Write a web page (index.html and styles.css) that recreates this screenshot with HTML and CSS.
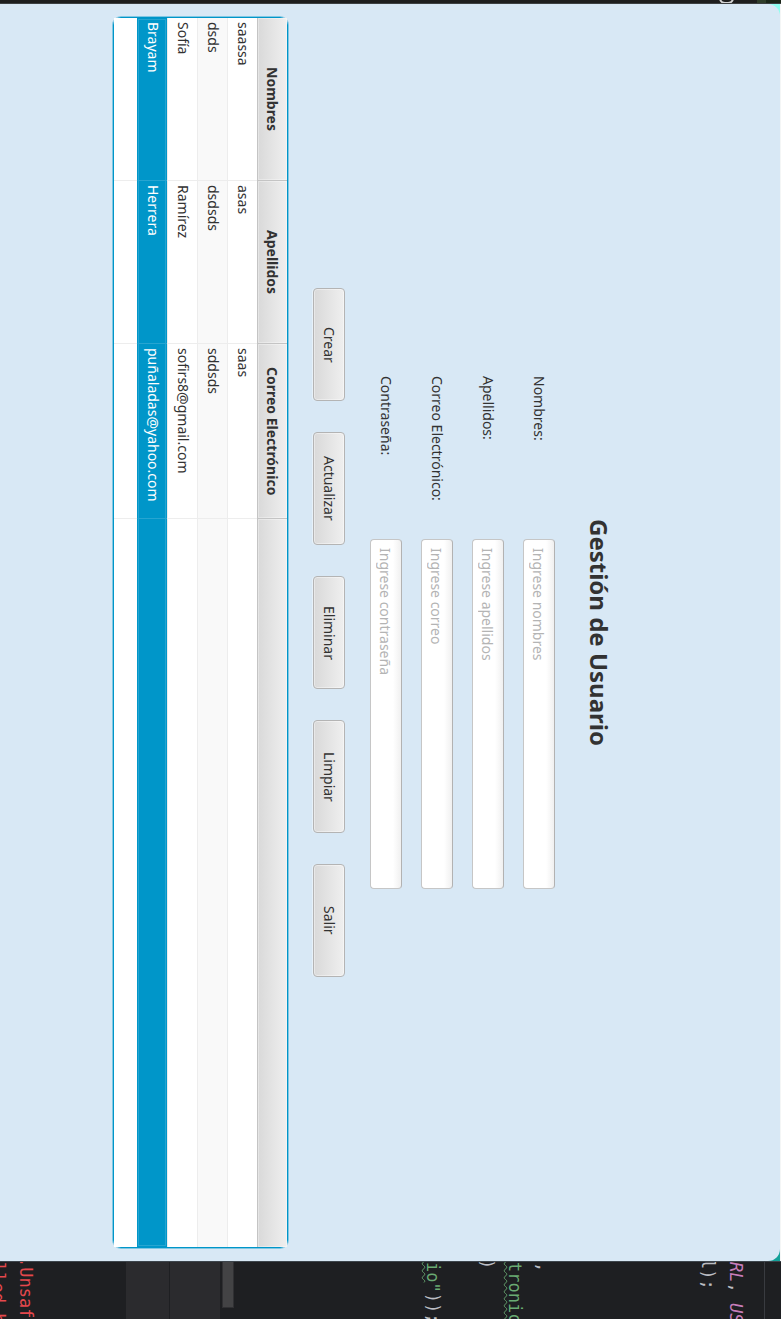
FILE: index.html
```html
<!DOCTYPE html>
<html lang="es">
<head>
<meta charset="utf-8">
<title>Gestión de Usuario</title>
<link rel="stylesheet" href="styles.css">
</head>
<body>
<div class="edge"><span class="edge-green"></span><span class="edge-glyph"></span></div>
<div class="desktop">
  <main class="window">
    <h1 class="title">Gestión de Usuario</h1>
    <form class="form">
      <label for="nombres">Nombres:</label>
      <input class="field" id="nombres" type="text" placeholder="Ingrese nombres">
      <label for="apellidos">Apellidos:</label>
      <input class="field" id="apellidos" type="text" placeholder="Ingrese apellidos">
      <label for="correo">Correo Electrónico:</label>
      <input class="field" id="correo" type="email" placeholder="Ingrese correo">
      <label for="clave">Contraseña:</label>
      <input class="field" id="clave" type="password" placeholder="Ingrese contraseña">
    </form>
    <div class="actions">
      <button class="button" type="button">Crear</button>
      <button class="button" type="button">Actualizar</button>
      <button class="button" type="button">Eliminar</button>
      <button class="button" type="button">Limpiar</button>
      <button class="button" type="button">Salir</button>
    </div>
    <div class="table-frame">
      <table class="table">
        <colgroup><col class="col-name"><col class="col-name"><col class="col-mail"><col></colgroup>
        <thead>
          <tr><th>Nombres</th><th>Apellidos</th><th>Correo Electrónico</th><th></th></tr>
        </thead>
        <tbody>
          <tr><td>saassa</td><td>asas</td><td>saas</td><td></td></tr>
          <tr class="odd"><td>dsds</td><td>dsdsds</td><td>sddsds</td><td></td></tr>
          <tr><td>Sofía</td><td>Ramírez</td><td>sofirs8@gmail.com</td><td></td></tr>
          <tr class="selected"><td>Brayam</td><td>Herrera</td><td>puñaladas@yahoo.com</td><td></td></tr>
          <tr class="rest"><td></td><td></td><td></td><td></td></tr>
        </tbody>
      </table>
    </div>
  </main>
</div>
<div class="editor">
  <div class="tabs"></div>
  <div class="line constant">RL<span class="plain">,</span> US</div>
  <div class="line plain cut">l);</div>
  <div class="line plain after-block">,</div>
  <div class="line string"><span class="typo">tronic</span></div>
  <div class="line plain cut">)</div>
  <div class="line string after-blank"><span class="typo">io</span>"<span class="plain">));</span></div>
  <div class="scrollbar"></div>
  <div class="panel panel-wide"></div>
  <div class="panel"></div>
  <div class="line error console">.Unsafe</div>
  <div class="line error">lled b</div>
</div>
</body>
</html>
```
FILE: styles.css
```css
html {
  writing-mode: vertical-rl;
  text-orientation: sideways;
  background: #1e1f22;
}

* {
  box-sizing: border-box;
}

body {
  display: flex;
  margin: 0;
  block-size: 100vw;
  inline-size: 100vh;
  overflow: hidden;
  color: #323232;
  font: 14px/20px "Noto Sans", "Open Sans", sans-serif;
}

/* strip of the application behind, before the window */
.edge {
  flex: none;
  inline-size: 4px;
  overflow: hidden;
  background: #1e1e1e;
  border-inline-end: 1px solid #3c4042;
}

.edge-green {
  display: block;
  block-size: 24px;
  inline-size: 3px;
  background: linear-gradient(to left, #1a2618 15px, #2f3d2a 15px);
}

.edge-glyph {
  display: block;
  block-size: 15px;
  inline-size: 12px;
  margin-block-start: 23px;
  margin-inline-start: -8px;
  border: 2px solid #d4d4d4;
  border-radius: 6px;
}

.desktop {
  display: flex;
  flex: 1;
  min-inline-size: 0;
  background: linear-gradient(to bottom, #8ffff0, #12a199);
  border-block-start: 1px solid #f4f6f6;
}

.window {
  flex: 1;
  min-inline-size: 0;
  padding-block-start: 164px;
  padding-inline: 13px;
  background: #d8e8f5;
  border-start-start-radius: 12px;
  border-start-end-radius: 12px;
}

.title {
  margin: 0;
  margin-block-end: 27px;
  font-size: 24px;
  line-height: 34px;
  text-align: center;
}

.form {
  display: grid;
  grid-template-columns: 153px 350px;
  justify-content: center;
  align-items: center;
  gap: 19px 10px;
}

.field {
  block-size: 32px;
  inline-size: 100%;
  margin: 0;
  padding-block: 1px 0;
  padding-inline: 8px;
  font: inherit;
  color: inherit;
  background: linear-gradient(to left, #f0f0f0, #fff 8px);
  border: 1px solid #c6c6c6;
  border-right-color: #b2b2b2;
  border-radius: 4px;
}

.field::placeholder {
  color: #b4b4b4;
}

.actions {
  display: flex;
  justify-content: center;
  gap: 31px;
  margin-block: 25px;
}

.button {
  block-size: 32px;
  inline-size: 113px;
  padding: 0;
  font: inherit;
  color: inherit;
  background: linear-gradient(to left, #efefef, #d9d9d9);
  border: 1px solid #b4b4b4;
  border-radius: 4px;
  box-shadow: inset 0 0 0 1px #ffffff66, -1px 0 0 #ffffff66;
}

.table-frame {
  border: 1px solid #0096c9;
  border-radius: 8px;
  box-shadow: 0 0 0 1px #0096c966;
}

.table {
  inline-size: 100%;
  table-layout: fixed;
  border-spacing: 0;
  background: #fff;
}

.col-name {
  inline-size: 163px;
}

.col-mail {
  inline-size: 175px;
}

.table th {
  block-size: 30px;
  padding: 0;
  padding-block-start: 2px;
  text-align: center;
  background: linear-gradient(to left, #efefef, #d9d9d9);
  border-block-end: 1px solid #c4c4c4;
  border-inline-end: 1px solid #c4c4c4;
  box-shadow: inset 0 0 0 1px #ffffff55;
}

.table td {
  block-size: 30px;
  padding: 0;
  padding-inline-start: 4px;
  border-block-end: 1px solid #ededed;
  border-inline-end: 1px solid #ededed;
}

.table th:last-child,
.table td:last-child {
  border-inline-end: 0;
}

.table .odd td {
  background: #f9f9f9;
}

.table .selected td {
  color: #fff;
  background: #0096c9;
  border-inline-end-color: #26a5d1;
  border-block-end-color: #0096c9;
}

.table .selected {
  outline: 1px solid #26a5d1;
  outline-offset: -2px;
}

.table .rest td {
  block-size: 23px;
  border-block-end: 0;
}

/* code editor showing past the window */
.editor {
  flex: none;
  inline-size: 58px;
  overflow: hidden;
  background: #1e1f22;
  border-inline-start: 1px solid #3d454c;
  font: 17px/28px "DejaVu Sans Mono", monospace;
}

.tabs {
  block-size: 17px;
  margin-block-end: 14px;
  border-block-end: 1px solid #393b40;
}

.line {
  block-size: 28px;
  white-space: pre;
}

.constant {
  color: #c77dbb;
  font-style: italic;
}

.plain {
  color: #bcbec4;
  font-style: normal;
}

.string {
  color: #6aab73;
}

.error {
  color: #e5484d;
}

.typo {
  text-decoration: underline wavy 1px #5f9a68;
  text-underline-position: left;
}

.cut {
  margin-inline-start: -3px;
}

.after-block {
  margin-block-start: 137px;
}

.after-blank {
  margin-block-start: 26px;
}

.scrollbar {
  block-size: 12px;
  inline-size: 46px;
  margin-block: 185px 2px;
  background: #434345;
  border: 1px solid #303033;
  border-inline-start: 0;
}

.panel {
  block-size: 43px;
  background: #2b2b2e;
}

.panel-wide {
  block-size: 50px;
  margin-block-end: 1px;
}

.console {
  margin-block-start: 86px;
  margin-inline-start: -5px;
}
```
